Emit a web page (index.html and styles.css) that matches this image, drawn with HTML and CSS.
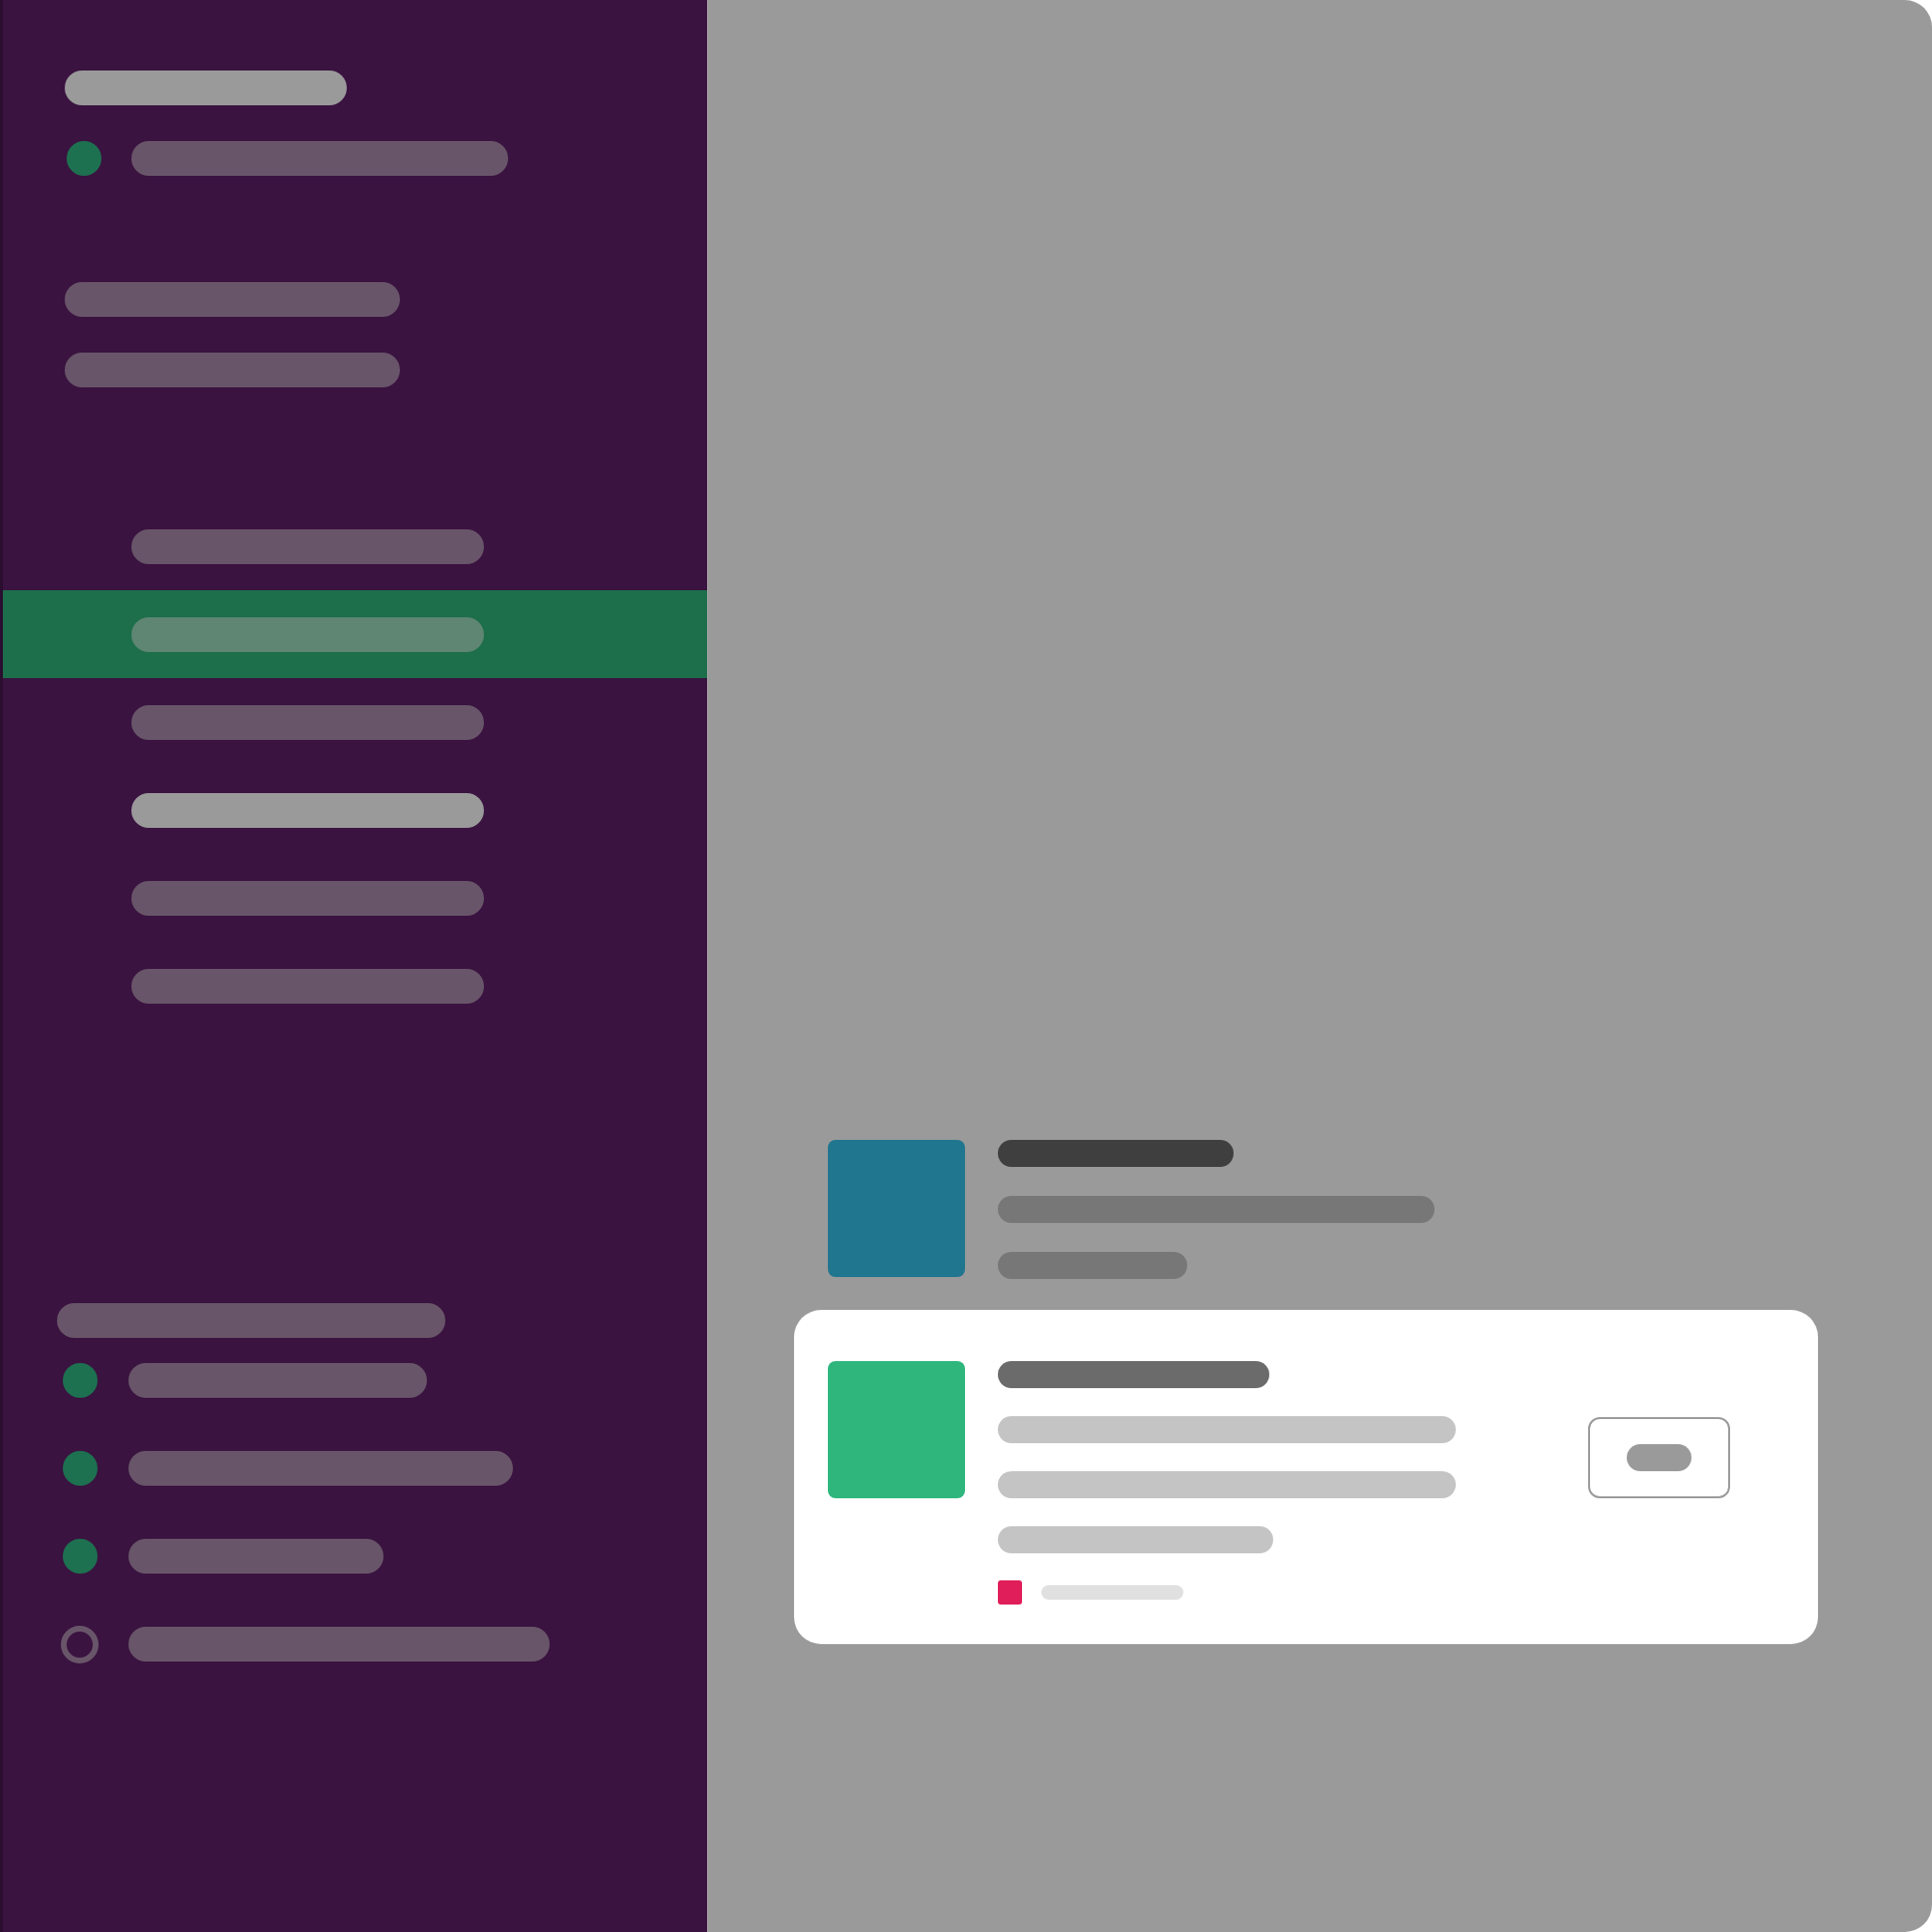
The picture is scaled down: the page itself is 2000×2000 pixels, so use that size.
FILE: index.html
```html
<!DOCTYPE html>
<html lang="en">
<head>
<meta charset="utf-8">
<title>Workspace</title>
<link rel="stylesheet" href="styles.css">
</head>
<body>
<div class="app">
  <aside class="sidebar">
    <div class="pill pill-gray ws-name"></div>
    <div class="user-row">
      <span class="dot"></span>
      <div class="pill pill-muted w-390"></div>
    </div>
    <div class="pill pill-muted section-a w-347"></div>
    <div class="pill pill-muted section-b w-347"></div>
    <ul class="channels">
      <li class="channel"><div class="pill pill-muted"></div></li>
      <li class="channel active"><div class="pill pill-active"></div></li>
      <li class="channel"><div class="pill pill-muted"></div></li>
      <li class="channel"><div class="pill pill-gray"></div></li>
      <li class="channel"><div class="pill pill-muted"></div></li>
      <li class="channel"><div class="pill pill-muted"></div></li>
    </ul>
    <div class="pill pill-muted dm-title"></div>
    <ul class="dms">
      <li class="dm"><span class="dot dot-sm"></span><div class="pill pill-muted w-309"></div></li>
      <li class="dm"><span class="dot dot-sm"></span><div class="pill pill-muted w-398"></div></li>
      <li class="dm"><span class="dot dot-sm"></span><div class="pill pill-muted w-264"></div></li>
      <li class="dm"><span class="ring"></span><div class="pill pill-muted w-436"></div></li>
    </ul>
  </aside>
  <main class="main">
    <div class="message">
      <div class="avatar avatar-blue"></div>
      <div class="lines lines-loose">
        <div class="bar bar-dark w-244"></div>
        <div class="bar bar-mid w-452"></div>
        <div class="bar bar-mid w-196"></div>
      </div>
    </div>
    <section class="card">
      <div class="avatar avatar-green"></div>
      <div class="lines lines-card">
        <div class="bar bar-strong w-281"></div>
        <div class="bar bar-light w-474"></div>
        <div class="bar bar-light w-474"></div>
        <div class="bar bar-light w-285"></div>
        <div class="meta">
          <span class="tag"></span>
          <span class="meta-bar"></span>
        </div>
      </div>
      <div class="button"><span class="button-label"></span></div>
    </section>
  </main>
</div>
</body>
</html>
```

FILE: styles.css
```css
* { box-sizing: border-box; }
html, body {
  margin: 0;
  padding: 0;
  background: #ffffff;
  font-family: "Liberation Sans", Arial, sans-serif;
}
ul { list-style: none; margin: 0; padding: 0; }

.app {
  display: flex;
  width: 2000px;
  height: 2000px;
}

/* ---------- sidebar ---------- */
.sidebar {
  width: 732px;
  flex: 0 0 732px;
  height: 2000px;
  background: #3a1340;
  border-left: 3px solid #2a0d2f;
  display: flex;
  flex-direction: column;
  align-items: flex-start;
}

.pill {
  height: 36px;
  border-radius: 18px;
  flex: 0 0 auto;
}
.pill-gray { background: #9a9a9a; }
.pill-muted { background: #695569; }
.pill-active { background: #5e8673; }

.ws-name {
  margin-top: 73px;
  margin-left: 64px;
  width: 292px;
}

.user-row {
  display: flex;
  align-items: center;
  gap: 31px;
  margin-top: 37px;
  margin-left: 66px;
}
.dot {
  width: 36px;
  height: 36px;
  border-radius: 50%;
  background: #1d7150;
  flex: 0 0 auto;
}

.section-a { margin-top: 110px; margin-left: 64px; }
.section-b { margin-top: 37px; margin-left: 64px; }

.channels {
  margin-top: 119px;
  width: 100%;
  display: flex;
  flex-direction: column;
}
.channel {
  height: 91px;
  display: flex;
  align-items: center;
  padding-left: 133px;
}
.channel .pill { width: 365px; }
.channel.active { background: #1d6e4b; }

.dm-title {
  margin-top: 283px;
  margin-left: 56px;
  width: 402px;
}

.dms {
  margin-top: 26px;
  display: flex;
  flex-direction: column;
  gap: 55px;
  margin-left: 60px;
}
.dm {
  display: flex;
  align-items: center;
  height: 36px;
}
.dot-sm {
  margin-left: 2px;
  margin-right: 32px;
}
.ring {
  width: 39px;
  height: 39px;
  border-radius: 50%;
  border: 6px solid #695569;
  margin-right: 31px;
  flex: 0 0 auto;
}

/* widths */
.w-390 { width: 390px; }
.w-347 { width: 347px; }
.w-309 { width: 309px; }
.w-398 { width: 398px; }
.w-264 { width: 264px; }
.w-436 { width: 436px; }
.w-244 { width: 244px; }
.w-452 { width: 452px; }
.w-196 { width: 196px; }
.w-281 { width: 281px; }
.w-474 { width: 474px; }
.w-285 { width: 285px; }

/* ---------- main ---------- */
.main {
  flex: 1 1 auto;
  height: 2000px;
  background: #9a9a9a;
  border-left: 1px solid #a6a6a6;
  border-radius: 0 28px 28px 0;
  display: flex;
  flex-direction: column;
  align-items: flex-start;
  padding-top: 1180px;
}

.message {
  display: flex;
  gap: 34px;
  margin-left: 124px;
}
.avatar {
  width: 142px;
  height: 142px;
  border-radius: 8px;
  flex: 0 0 auto;
}
.avatar-blue { background: #20768f; }
.avatar-green { background: #2eb67d; }

.lines {
  display: flex;
  flex-direction: column;
  align-items: flex-start;
}
.lines-loose { gap: 30px; }
.lines-card { gap: 29px; width: 474px; }

.bar {
  height: 28px;
  border-radius: 14px;
}
.bar-dark { background: #3f3f3f; }
.bar-mid { background: #777777; }
.bar-strong { background: #6b6b6b; }
.bar-light { background: #c4c4c4; }

.card {
  margin-top: 32px;
  margin-left: 89px;
  width: 1060px;
  height: 346px;
  background: #ffffff;
  border-radius: 28px;
  padding: 53px 35px 41px;
  display: flex;
  gap: 34px;
  align-items: flex-start;
}

.meta {
  display: flex;
  align-items: center;
  gap: 20px;
  margin-top: -1px;
}
.tag {
  width: 25px;
  height: 25px;
  border-radius: 3px;
  background: #e01e5a;
}
.meta-bar {
  width: 147px;
  height: 15px;
  border-radius: 8px;
  background: #e0e0e0;
}

.button {
  margin-left: 103px;
  margin-top: 58px;
  width: 147px;
  height: 84px;
  border: 2px solid #9a9a9a;
  border-radius: 12px;
  display: flex;
  align-items: center;
  justify-content: center;
}
.button-label {
  width: 67px;
  height: 28px;
  border-radius: 14px;
  background: #9a9a9a;
}
```
